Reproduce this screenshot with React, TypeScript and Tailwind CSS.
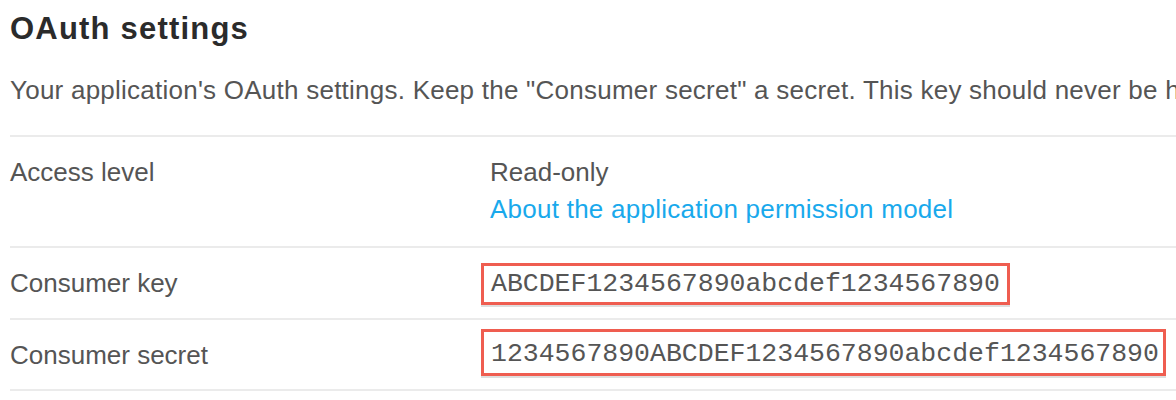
export default function App() {
  return (
    <div className="h-[400px] w-[1176px] overflow-hidden bg-white pl-[10px] font-['Liberation_Sans',Arial,sans-serif]">
      <h2 className="m-0 pt-[10px] text-[31px] font-bold leading-[37px] tracking-[1.2px] text-[#2b2b2b]">
        OAuth settings
      </h2>
      <p className="m-0 mt-[25px] whitespace-nowrap text-[26px] leading-[37px] tracking-[0.24px] text-[#555]">
        Your application's OAuth settings. Keep the "Consumer secret" a secret. This key should never be human-readable in your application.
      </p>

      <div className="mt-[26px] border-t-2 border-[#ebebeb] text-[26px] leading-[37px] text-[#555]">
        <div className="grid grid-cols-[480px_1fr] border-b-2 border-[#ebebeb] pt-[17px] pb-[18px]">
          <div>Access level</div>
          <div className="flex flex-col">
            <span>Read-only</span>
            <a href="#" className="tracking-[0.25px] text-[#19a9ec] no-underline">
              About the application permission model
            </a>
          </div>
        </div>

        <div className="grid grid-cols-[480px_1fr] items-start border-b-2 border-[#ebebeb] pt-[15px] pb-[13px]">
          <div className="mt-[2px]">Consumer key</div>
          <div>
            <span className="-ml-[9px] inline-block h-[42px] border-[3px] border-[#ef5d50] pl-[7px] pr-[7px] font-['Liberation_Mono','Courier_New',monospace] text-[26.5px] leading-[36px] text-[#555] shadow-[0_2px_0_rgba(0,0,0,0.13)]">
              ABCDEF1234567890abcdef1234567890
            </span>
          </div>
        </div>

        <div className="grid grid-cols-[480px_1fr] items-start border-b-2 border-[#ebebeb] pt-[9px] pb-[13px]">
          <div className="mt-[8px]">Consumer secret</div>
          <div>
            <span className="-ml-[9px] inline-block h-[47px] border-[3px] border-[#ef5d50] pt-[3px] pl-[7px] pr-[4px] font-['Liberation_Mono','Courier_New',monospace] text-[26.5px] leading-[38px] text-[#555] shadow-[0_2px_0_rgba(0,0,0,0.13)]">
              1234567890ABCDEF1234567890abcdef1234567890
            </span>
          </div>
        </div>
      </div>
    </div>
  )
}
